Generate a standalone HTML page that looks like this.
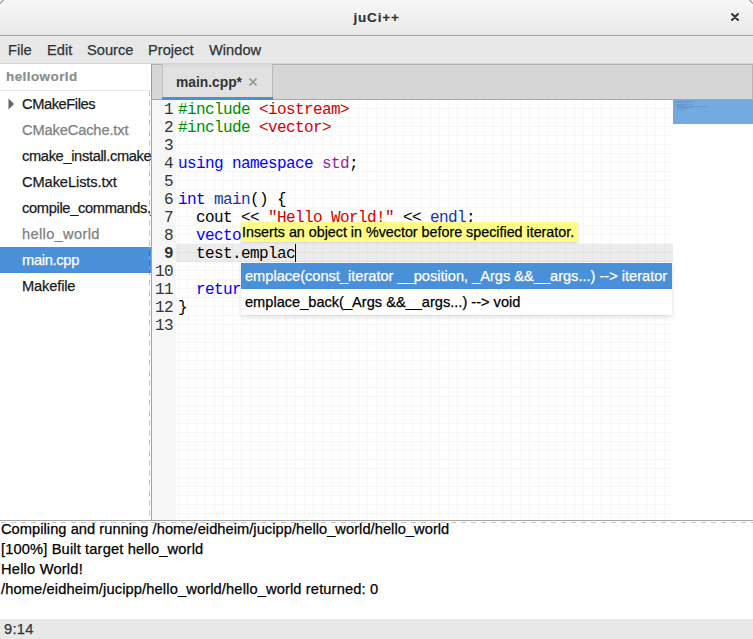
<!DOCTYPE html>
<html><head><meta charset="utf-8">
<style>
*{margin:0;padding:0;box-sizing:border-box}
html,body{width:753px;height:639px;overflow:hidden;background:#fff}
body{position:relative;font-family:"Liberation Sans",sans-serif;font-size:14.67px;color:#2e3436}
.a{position:absolute;white-space:pre;line-height:1;-webkit-text-stroke:0.25px currentColor}
#title{position:absolute;left:0;top:0;width:753px;height:36px;background:linear-gradient(#f7f7f7,#e9e9e9);border-bottom:1px solid #a0a0a0}
#menubar{position:absolute;left:0;top:36px;width:753px;height:28px;background:#e8e8e8;border-bottom:1px solid #d3d3d3;box-shadow:inset 0 1px #eeeeee}
#sidebar{position:absolute;left:0;top:64px;width:151px;height:456px;background:#fff;overflow:hidden}
#nbhead{position:absolute;left:151px;top:64px;width:602px;height:36px;background:#d6d6d6;border-top:1px solid #b0b0b0;border-left:1px solid #9c9c9c;border-bottom:1px solid #a5a5a5;border-right:1px solid #b5b5b5}
#tab{position:absolute;left:162px;top:64px;width:111px;height:35px;background:linear-gradient(#d8d8d8,#e1e1e1 5px);border-left:1px solid #c4c4c4;border-right:1px solid #b8b8b8}
#tabline{position:absolute;left:162px;top:97px;width:111px;height:3px;background:#4a90d9}
#editor{position:absolute;left:151px;top:100px;width:602px;height:420px;border-left:1px solid #a3a3a3;background-color:#fff;
 background-image:linear-gradient(90deg,#f7f7f7 1px,transparent 1px),linear-gradient(#f7f7f7 1px,transparent 1px);
 background-size:9px 9px;background-position:8px 8px}
#gutter{position:absolute;left:152px;top:100px;width:24px;height:420px;background:#f6f6f6}
#curline{position:absolute;left:176px;top:244px;width:497px;height:18px;background:rgba(0,0,0,0.075)}
#minimap{position:absolute;left:673px;top:100px;width:80px;height:420px;background:#fff}
#mmsel{position:absolute;left:673px;top:100px;width:80px;height:24px;background:#74aae2}
.code{position:absolute;font-family:"Liberation Mono",monospace;font-size:16px;letter-spacing:-0.6px;line-height:18px;white-space:pre;color:#000}
.ln{position:absolute;font-family:"Liberation Mono",monospace;font-size:16px;letter-spacing:-0.6px;line-height:18px;white-space:pre;color:#333;text-align:right;width:20px;left:153px}
.pp{color:#008c00}.str{color:#d40000}.kw{color:#0000ff}.fn{color:#1535a8}.ns{color:#9a1fa3}
#tooltip{position:absolute;left:241px;top:222px;width:337px;height:20px;background:#fffd88;box-shadow:0 1px 2px rgba(0,0,0,0.2)}
#popup{position:absolute;left:241px;top:263px;width:431px;height:52px;background:#fff;box-shadow:0 2px 5px rgba(0,0,0,0.13)}
#popsel{position:absolute;left:241px;top:263px;width:431px;height:26px;background:#4a90d9}
#hsep{position:absolute;left:0;top:520px;width:753px;height:1px;background:#a5a5a5}
#hdash{position:absolute;left:0;top:522px;width:753px;height:1px;background-image:linear-gradient(90deg,#c8c8c8 5px,transparent 5px);background-size:10px 1px;background-position:1px 0}
#vdash{position:absolute;left:149px;top:91px;width:1px;height:429px;background-image:linear-gradient(rgba(0,0,0,0.21) 6px,rgba(255,255,255,0.2) 6px);background-size:1px 10px;background-position:0 -1px}
#status{position:absolute;left:0;top:619px;width:753px;height:20px;background:#e8e8e8}
</style></head><body>
<div id="title"></div>
<div class="a" style="left:353.5px;top:11.2px;font-weight:bold;font-size:13.5px;letter-spacing:0.8px;-webkit-text-stroke:0.15px currentColor">juCi++</div>
<svg style="position:absolute;left:730px;top:12px" width="11" height="10" viewBox="0 0 11 10"><path d="M2 2 L8 8 M8 2 L2 8" stroke="#2e3436" stroke-width="2" stroke-linecap="round"/></svg>
<svg style="position:absolute;left:0;top:0" width="753" height="6" viewBox="0 0 753 6"><path d="M0 3.5 L3.5 0 M749.5 0 L753 3.5" stroke="#9a9a9a" stroke-width="1.2"/></svg>
<div id="menubar"></div>
<div class="a" style="left:8px;top:42.6px">File</div>
<div class="a" style="left:47px;top:42.6px">Edit</div>
<div class="a" style="left:87px;top:42.6px">Source</div>
<div class="a" style="left:148px;top:42.6px">Project</div>
<div class="a" style="left:209px;top:42.6px">Window</div>

<div id="sidebar">
<div class="a" style="left:6px;top:6.4px;font-weight:bold;font-size:13.5px;letter-spacing:0.42px;color:#8b8e8f;-webkit-text-stroke:0.2px currentColor">helloworld</div>
<div style="position:absolute;left:0;top:26px;width:151px;height:1px;background:#e8e8e8"></div>
<svg style="position:absolute;left:8px;top:34px" width="7" height="12" viewBox="0 0 7 12"><path d="M0.5 0.5 L6 6 L0.5 11.5Z" fill="#5f6566"/></svg>
<div class="a" style="left:22px;top:32.6px;color:#1a1a1a;letter-spacing:-0.42px">CMakeFiles</div>
<div class="a" style="left:22px;top:58.6px;color:#808080;letter-spacing:-0.14px">CMakeCache.txt</div>
<div class="a" style="left:22px;top:84.6px;color:#1a1a1a;letter-spacing:-0.35px">cmake_install.cmake</div>
<div class="a" style="left:22px;top:110.6px;color:#1a1a1a;letter-spacing:-0.1px">CMakeLists.txt</div>
<div class="a" style="left:22px;top:136.6px;color:#1a1a1a;letter-spacing:-0.33px">compile_commands.json</div>
<div class="a" style="left:22px;top:162.6px;color:#808080;letter-spacing:0.33px">hello_world</div>
<div style="position:absolute;left:0;top:183px;width:151px;height:26px;background:#4a90d9"></div>
<div class="a" style="left:22px;top:188.6px;color:#fff;letter-spacing:-0.3px">main.cpp</div>
<div class="a" style="left:22px;top:214.6px;color:#1a1a1a;letter-spacing:-0.15px">Makefile</div>
</div>

<div id="nbhead"></div>
<div id="tab"></div>
<div id="tabline"></div>
<div class="a" style="left:176px;top:75.6px;font-weight:bold;font-size:13.8px;-webkit-text-stroke:0">main.cpp*</div>
<svg style="position:absolute;left:248px;top:77px" width="10" height="10" viewBox="0 0 10 10"><path d="M1.5 1.5 L8.5 8.5 M8.5 1.5 L1.5 8.5" stroke="#919596" stroke-width="1.6"/></svg>

<div id="editor"></div>
<div id="gutter"></div>
<div id="curline"></div>
<div id="minimap"></div>
<div id="mmsel"></div>
<div style="position:absolute;left:675px;top:101px;width:8px;height:1px;background:#30508a;opacity:0.16"></div><div style="position:absolute;left:684px;top:101px;width:10px;height:1px;background:#30508a;opacity:0.16"></div><div style="position:absolute;left:675px;top:102px;width:8px;height:1px;background:#30508a;opacity:0.16"></div><div style="position:absolute;left:684px;top:102px;width:7px;height:1px;background:#30508a;opacity:0.16"></div><div style="position:absolute;left:675px;top:103.5px;width:19px;height:1px;background:#30508a;opacity:0.16"></div><div style="position:absolute;left:675px;top:105.4px;width:11px;height:1px;background:#30508a;opacity:0.16"></div><div style="position:absolute;left:677px;top:106.4px;width:30px;height:1px;background:#30508a;opacity:0.16"></div><div style="position:absolute;left:677px;top:107.3px;width:16px;height:1px;background:#30508a;opacity:0.16"></div><div style="position:absolute;left:677px;top:108.3px;width:11px;height:1px;background:#30508a;opacity:0.16"></div><div style="position:absolute;left:677px;top:110.2px;width:8px;height:1px;background:#30508a;opacity:0.16"></div><div style="position:absolute;left:675px;top:111.1px;width:1px;height:1px;background:#30508a;opacity:0.16"></div>
<div class="code" style="left:178px;top:101px"><span class="pp">#include</span> <span class="str">&lt;iostream&gt;</span>
<span class="pp">#include</span> <span class="str">&lt;vector&gt;</span>

<span class="kw">using</span> <span class="kw">namespace</span> <span class="ns">std</span>;

<span class="kw">int</span> <span class="fn">main</span>() {
  cout &lt;&lt; <span class="str">"Hello World!"</span> &lt;&lt; <span class="fn">endl</span>;
  <span class="kw">vecto</span>
  test.emplac

  <span class="kw">return</span> 0;
}
</div>
<div style="position:absolute;left:295px;top:244px;width:1px;height:18px;background:#000"></div>
<div class="ln" style="top:101px;">1</div><div class="ln" style="top:119px;">2</div><div class="ln" style="top:137px;">3</div><div class="ln" style="top:155px;">4</div><div class="ln" style="top:173px;">5</div><div class="ln" style="top:191px;">6</div><div class="ln" style="top:209px;">7</div><div class="ln" style="top:227px;">8</div><div class="ln" style="top:245px;font-weight:bold;">9</div><div class="ln" style="top:263px;">10</div><div class="ln" style="top:281px;">11</div><div class="ln" style="top:299px;">12</div><div class="ln" style="top:317px;">13</div>
<div id="tooltip"></div>
<div class="a" style="left:242px;top:224.8px;font-size:14.3px;color:#000">Inserts an object in %vector before specified iterator.</div>
<div id="popup"></div>
<div id="popsel"></div>
<div class="a" style="left:245px;top:268.6px;color:#fff;font-size:14.6px">emplace(const_iterator __position, _Args &amp;&amp;__args...) --&gt; iterator</div>
<div class="a" style="left:245px;top:294.6px;color:#000;font-size:14.6px">emplace_back(_Args &amp;&amp;__args...) --&gt; void</div>

<div id="hsep"></div>
<div id="hdash"></div>
<div id="vdash"></div>
<div class="a" style="left:1px;top:521.6px;color:#000;letter-spacing:0.04px">Compiling and running /home/eidheim/jucipp/hello_world/hello_world</div>
<div class="a" style="left:1px;top:541.6px;color:#000;letter-spacing:0.14px">[100%] Built target hello_world</div>
<div class="a" style="left:1px;top:561.6px;color:#000;letter-spacing:0.2px">Hello World!</div>
<div class="a" style="left:1px;top:581.6px;color:#000;letter-spacing:0.13px">/home/eidheim/jucipp/hello_world/hello_world returned: 0</div>
<div id="status"></div>
<div class="a" style="left:4px;top:621.6px;letter-spacing:0.3px">9:14</div>
</body></html>
